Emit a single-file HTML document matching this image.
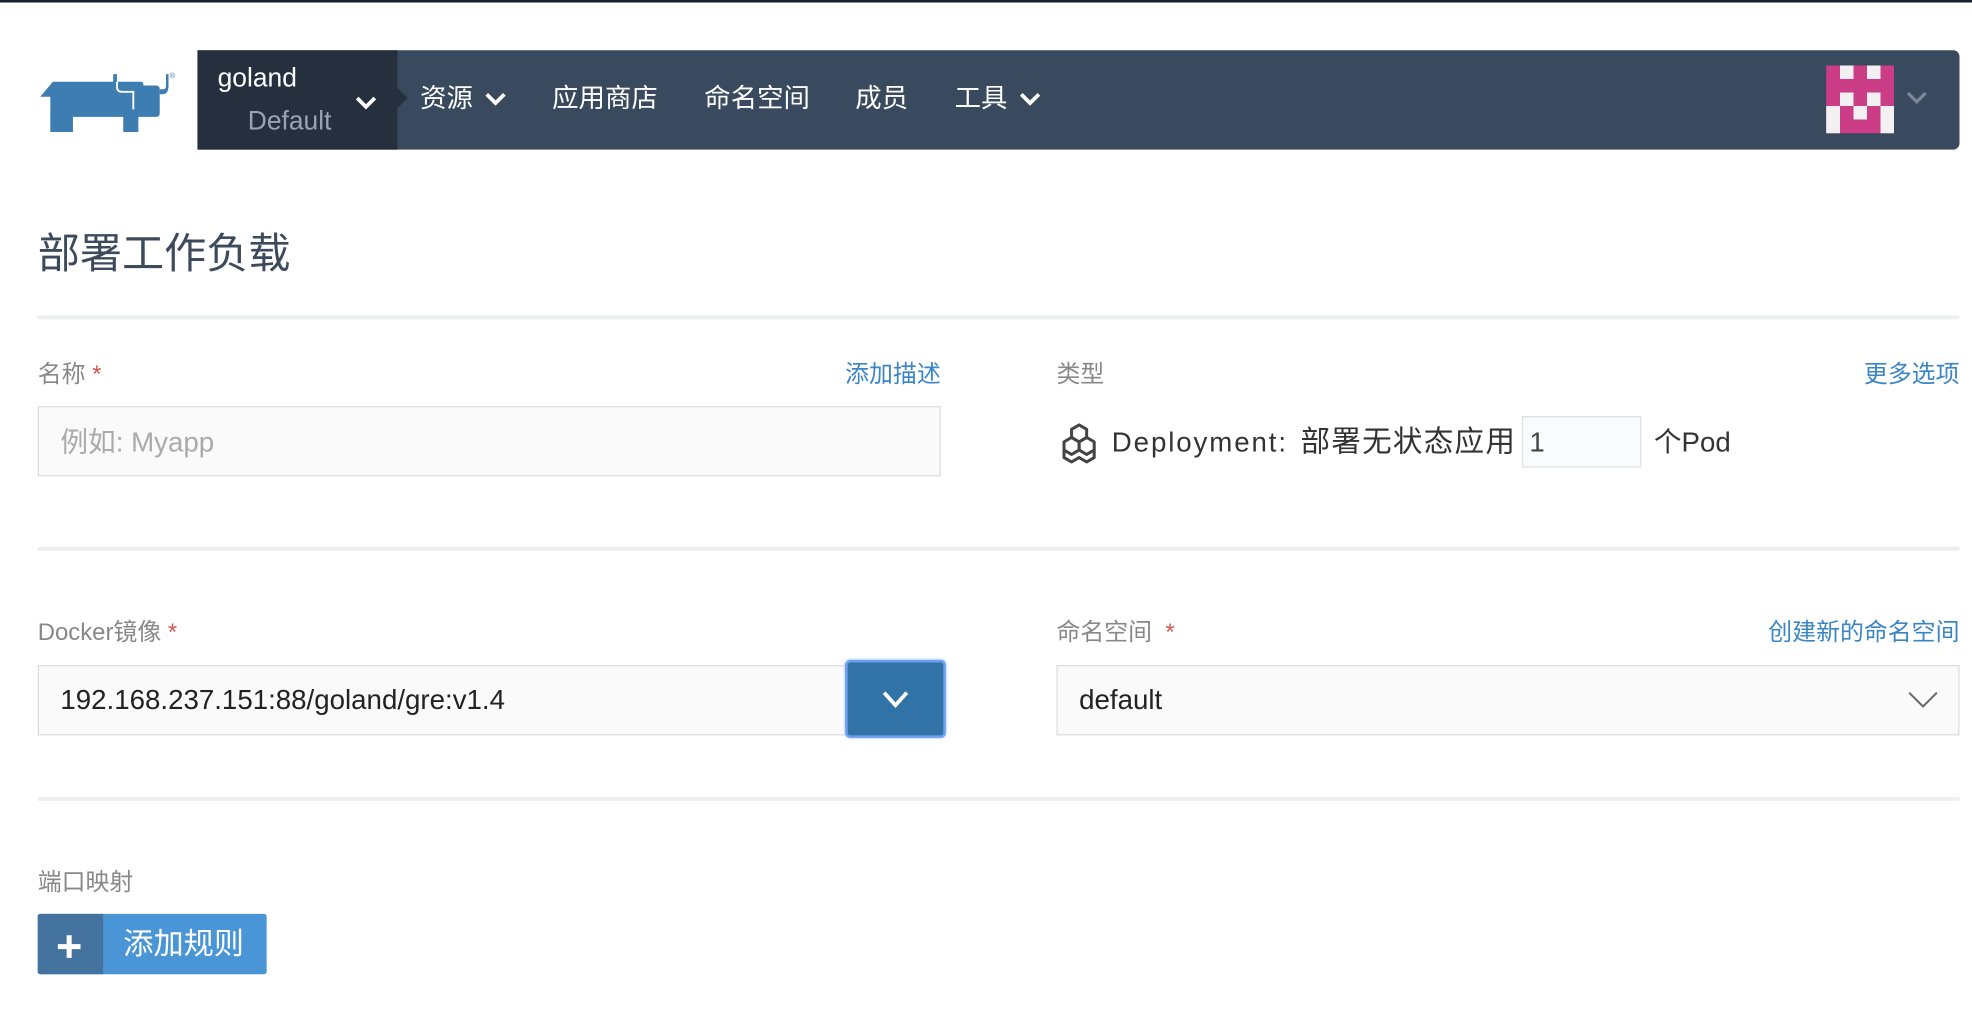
<!DOCTYPE html>
<html><head><meta charset="utf-8"><style>
html,body{margin:0;padding:0;width:1972px;height:1022px;overflow:hidden;background:#fff}
#w{position:absolute;left:0;top:0;width:1568px;height:813px;transform:scale(1.2577,1.2571);transform-origin:0 0;font-family:"Liberation Sans","Noto Sans CJK SC",sans-serif}
.a{position:absolute;white-space:nowrap}
.hr{position:absolute;left:30px;width:1528px;height:3px;background:#eceeef}
.lbl{font-size:19px;color:#888;line-height:24px}
.lnk{font-size:19px;color:#3a85c6;line-height:24px}
.st{color:#d9534f}
.nav{font-size:21px;color:#fff;line-height:28px}
</style></head><body><div id="w">
<div class="a" style="left:0;top:0;width:1568px;height:2px;background:#1d2233"></div>
<svg class="a" style="left:30px;top:55px" width="110" height="52" viewBox="0 0 110 52">
<path d="M2 22 L12 10 H60 V4 H63 V10 H82 Q84 10 84 12 V13 H94 Q97 13 97 16 V35 Q97 38 94 38 H80 V50 H68 V38 H28 V50 H10 V22 Z" fill="#3d7db2"/>
<path d="M97 16 H100 Q102 16 102 13 V4 H104 V13 Q104 20 99 20 H97 Z" fill="#3d7db2"/>
<path d="M63 10 V14 Q63 18 67 18 H76 V32" stroke="#fff" stroke-width="1.5" fill="none"/>
<text x="105" y="7" font-size="6" fill="#3d7db2" font-family="Liberation Sans">®</text>
</svg>
<div class="a" style="left:157px;top:40px;width:1401px;height:79px;background:#394a5e;border-radius:0 5px 5px 0"></div>
<div class="a" style="left:157px;top:40px;width:159px;height:79px;background:#262f3d"></div>
<div class="a" style="left:316px;top:70px;width:0;height:0;border-top:8px solid transparent;border-bottom:8px solid transparent;border-left:8px solid #262f3d"></div>
<div class="a nav" style="left:173px;top:49px">goland</div>
<div class="a nav" style="left:197px;top:83px;color:#9aa4b0">Default</div>
<svg class="a" style="left:281px;top:75px" width="20" height="14"><path d="M3 3 L10 10 L17 3" stroke="#fff" stroke-width="3" fill="none"/></svg>
<div class="a nav" style="left:334px;top:65px">资源</div>
<svg class="a" style="left:384px;top:72px" width="20" height="14"><path d="M3 3 L10 10 L17 3" stroke="#fff" stroke-width="3" fill="none"/></svg>
<div class="a nav" style="left:439px;top:65px">应用商店</div>
<div class="a nav" style="left:560px;top:65px">命名空间</div>
<div class="a nav" style="left:680px;top:65px">成员</div>
<div class="a nav" style="left:759px;top:65px">工具</div>
<svg class="a" style="left:809px;top:72px" width="20" height="14"><path d="M3 3 L10 10 L17 3" stroke="#fff" stroke-width="3" fill="none"/></svg>
<svg class="a" style="left:1452px;top:52px" width="54" height="54" viewBox="0 0 5 5" shape-rendering="crispEdges">
<rect width="5" height="5" fill="#cc3d88"/>
<rect x="1" y="0" width="1" height="1" fill="#f2f0f0"/><rect x="3" y="0" width="1" height="1" fill="#f2f0f0"/>
<rect x="1" y="2" width="1" height="1" fill="#f2f0f0"/><rect x="3" y="2" width="1" height="1" fill="#f2f0f0"/>
<rect x="0" y="3" width="1" height="2" fill="#f2f0f0"/><rect x="4" y="3" width="1" height="2" fill="#f2f0f0"/>
<rect x="2" y="3" width="1" height="1" fill="#f2f0f0"/>
</svg>
<svg class="a" style="left:1514px;top:71px" width="20" height="14"><path d="M3 3 L10 10 L17 3" stroke="#7d8a98" stroke-width="2.5" fill="none"/></svg>

<div class="a" style="left:30px;top:181px;font-size:33.5px;color:#3d4a5c;line-height:44px">部署工作负载</div>
<div class="hr" style="top:251px"></div>

<div class="a lbl" style="left:30px;top:287px">名称 <span class="st">*</span></div>
<div class="a lnk" style="right:820px;top:287px">添加描述</div>
<div class="a lbl" style="left:840px;top:287px">类型</div>
<div class="a lnk" style="right:10px;top:287px">更多选项</div>
<div class="a" style="left:30px;top:323px;width:716px;height:54px;background:#fafafa;border:1px solid #ddd"></div>
<div class="a" style="left:48px;top:337px;font-size:22px;color:#aaa;line-height:30px">例如: Myapp</div>

<svg class="a" style="left:842px;top:336px" width="32" height="34" viewBox="0 0 32 34"><g stroke="#444" stroke-width="2.4" fill="none" stroke-linejoin="round">
<path d="M16 2 L22 5.5 V12 L16 15.5 L10 12 V5.5 Z"/><path d="M10 12 L16 15.5 V22 L10 25.5 L4 22 V15.5 Z"/><path d="M22 12 L28 15.5 V22 L22 25.5 L16 22 V15.5 Z"/>
<path d="M4 22 V28 L10 31.5 L16 28 L22 31.5 L28 28 V22"/></g></svg>
<div class="a" style="left:884px;top:337px;font-size:22px;color:#333;line-height:30px;letter-spacing:1.5px">Deployment:</div>
<div class="a" style="left:1034px;top:336px;font-size:23.5px;color:#333;line-height:30px;letter-spacing:1px">部署无状态应用</div>
<div class="a" style="left:1210px;top:331px;width:93px;height:39px;background:#fafbfd;border:1px solid #dde1e5"></div>
<div class="a" style="left:1216px;top:337px;font-size:22px;color:#444;line-height:30px">1</div>
<div class="a" style="left:1315px;top:337px;font-size:22px;color:#333;line-height:30px">个Pod</div>

<div class="hr" style="top:435px"></div>

<div class="a lbl" style="left:30px;top:492px">Docker镜像 <span class="st">*</span></div>
<div class="a lbl" style="left:840px;top:492px">命名空间 &nbsp;<span class="st">*</span></div>
<div class="a lnk" style="right:10px;top:492px">创建新的命名空间</div>
<div class="a" style="left:30px;top:529px;width:660px;height:54px;background:#fafafa;border:1px solid #ddd"></div>
<div class="a" style="left:48px;top:542px;font-size:22px;color:#222;line-height:30px">192.168.237.151:88/goland/gre:v1.4</div>
<div class="a" style="left:672px;top:525px;width:76px;height:58px;background:#3173a6;border:2px solid #6c9ff0;border-radius:4px;box-shadow:0 0 2px #8ab4f5"></div>
<svg class="a" style="left:700px;top:548px" width="24" height="18"><path d="M3 3 L12 13 L21 3" stroke="#fff" stroke-width="3" fill="none"/></svg>
<div class="a" style="left:840px;top:529px;width:716px;height:54px;background:#fafafa;border:1px solid #ddd"></div>
<div class="a" style="left:858px;top:542px;font-size:22px;color:#222;line-height:30px">default</div>
<svg class="a" style="left:1516px;top:548px" width="26" height="18"><path d="M2 3 L13 14 L24 3" stroke="#666" stroke-width="1.6" fill="none"/></svg>

<div class="hr" style="top:634px"></div>

<div class="a lbl" style="left:30px;top:691px">端口映射</div>
<div class="a" style="left:30px;top:727px;width:182px;height:48px;background:#4a95d6;border-radius:2px"></div>
<div class="a" style="left:30px;top:727px;width:52px;height:48px;background:#44739f;border-radius:2px 0 0 2px"></div>
<svg class="a" style="left:44px;top:742px" width="22" height="22"><path d="M11 2 V20 M2 11 H20" stroke="#fff" stroke-width="4"/></svg>
<div class="a" style="left:98px;top:736px;font-size:24px;color:#fff;line-height:32px">添加规则</div>
</div></body></html>
